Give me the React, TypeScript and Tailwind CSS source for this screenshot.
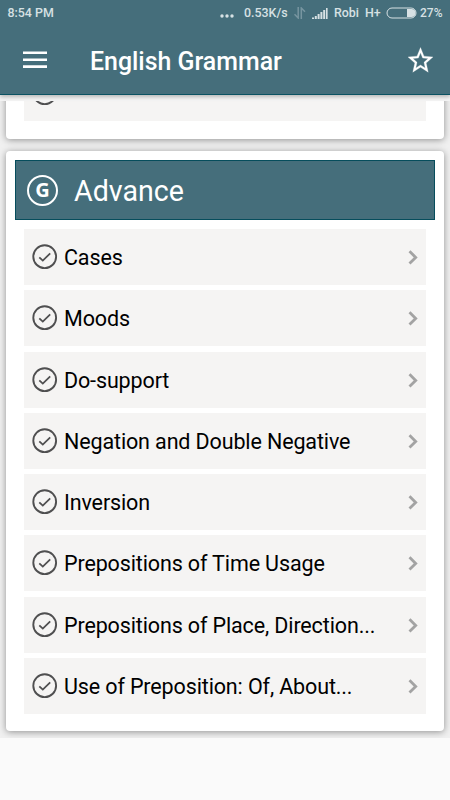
import React from "react";

const topics = [
  "Cases",
  "Moods",
  "Do-support",
  "Negation and Double Negative",
  "Inversion",
  "Prepositions of Time Usage",
  "Prepositions of Place, Direction...",
  "Use of Preposition: Of, About...",
];

function TopicRow({ title }: { title: string }) {
  return (
    <div className="flex h-14 shrink-0 items-center bg-[#f5f4f3] pl-2 pr-2">
      <svg width="26" height="26" viewBox="0 0 26 26" fill="none" stroke="#4f4f50">
        <circle cx="12.7" cy="12.7" r="11.4" strokeWidth="1.9" />
        <path d="M7.3 13.3l3.5 3.3 7.4-7.2" strokeWidth="1.8" />
      </svg>
      <p className="ml-1.5 mt-[2px] flex-1 whitespace-nowrap text-[21.5px] leading-7 tracking-[-0.13px] text-black">
        {title}
      </p>
      <svg width="10" height="16" viewBox="0 0 10 16" fill="none" stroke="#a3a3a3" strokeWidth="2.8">
        <path d="M1.5 2.2L7.7 8.4l-6.2 6.2" />
      </svg>
    </div>
  );
}

function StatusBar() {
  return (
    <div className="flex h-[26px] items-center pl-[7.5px] text-[12.4px] font-medium text-[#d7e1e4]">
      <p className="w-[212.5px]">8:54 PM</p>
      <svg width="14" height="4" viewBox="0 0 14 4" fill="currentColor" className="mt-[6px]">
        <circle cx="2" cy="2" r="1.7" />
        <circle cx="7" cy="2" r="1.7" />
        <circle cx="12" cy="2" r="1.7" />
      </svg>
      <p className="ml-[10px] w-[50px] whitespace-nowrap">0.53K/s</p>
      <svg width="12" height="12" viewBox="0 0 12 12" fill="none" stroke="#7795a0" strokeWidth="1.5">
        <path d="M4.2 0v11L0.5 7.3M7.3 12V1L11 4.7" />
      </svg>
      <svg width="16" height="12" viewBox="0 0 16 12" fill="currentColor" className="ml-[6px]">
        <path d="M0 10.5h2V12H0zM2.8 9h2v3h-2zM5.6 7h2v5h-2zM8.4 5h2v7h-2zM11.2 3h2v9h-2zM14 1h1.6v11H14z" />
      </svg>
      <p className="ml-[6px] w-[31px]">Robi</p>
      <p className="w-[20px] whitespace-nowrap">H+</p>
      <svg width="32" height="12" viewBox="0 0 32 12">
        <rect x="2" y="1" width="29" height="10" rx="5" fill="none" stroke="currentColor" />
        <path d="M22 2h4.5a4 4 0 0 1 0 8H22z" fill="currentColor" />
      </svg>
      <p className="ml-[3px] whitespace-nowrap text-[12px]">27%</p>
    </div>
  );
}

export default function App() {
  return (
    <div className="flex h-[800px] w-[450px] flex-col overflow-hidden bg-[#fafafa] font-[Roboto,sans-serif]">
      <div className="z-10 h-[95px] shrink-0 border-b border-[#0b5363] bg-[#456e7b] shadow-[0_2px_4px_rgba(0,0,0,0.25)]">
        <StatusBar />
        <div className="flex h-[68px] items-center pl-[23px] pr-[17px] text-white">
          <svg width="24" height="18" viewBox="0 0 24 18" fill="white" className="-mt-px">
            <path d="M0 .5h24v2.6H0zM0 7.4h24V10H0zM0 14.3h24v2.6H0z" />
          </svg>
          <h1 className="ml-[43px] mt-[4px] flex-1 text-[24.9px] font-medium">English Grammar</h1>
          <svg width="25" height="26" viewBox="2 1.6 20 20" preserveAspectRatio="none" fill="white" stroke="white" strokeWidth="0.2" className="-mt-px">
            <path d="M22 9.24l-7.19-.62L12 2 9.19 8.63 2 9.24l5.46 4.73L5.82 21 12 17.27 18.18 21l-1.63-7.03L22 9.24zM12 15.4l-3.76 2.27 1-4.28-3.32-2.88 4.38-.38L12 6.1l1.71 4.04 4.38.38-3.32 2.88 1 4.28L12 15.4z" />
          </svg>
        </div>
      </div>

      <div className="h-1.5 shrink-0 bg-[#f5f5f5]" />
      <div className="flex h-[637px] shrink-0 flex-col justify-end gap-3 overflow-hidden bg-[#f0f0f0] px-1.5 pb-[7px]">
        <div className="rounded bg-white px-[18px] pb-[17.6px] shadow-[0_1px_7px_rgba(0,0,0,0.4)]">
          <TopicRow title="Suffixes" />
        </div>

        <div className="h-[580px] shrink-0 rounded bg-white px-[9px] pt-[9px] shadow-[0_1px_7px_rgba(0,0,0,0.4)]">
          <div className="flex h-[60px] items-center border border-[#064d5c] bg-[#456e7b] pl-[11px] text-white">
            <div className="flex h-[31px] w-[31px] items-center justify-center rounded-full border-2 border-white font-['Open_Sans',sans-serif] text-[20px] font-bold">
              G
            </div>
            <h2 className="ml-4 mt-[3px] text-[28.6px]">Advance</h2>
          </div>
          <div className="mx-[9px] mt-[9px] flex flex-col gap-[5.25px]">
            {topics.map((topic) => (
              <TopicRow key={topic} title={topic} />
            ))}
          </div>
        </div>
      </div>
    </div>
  );
}
